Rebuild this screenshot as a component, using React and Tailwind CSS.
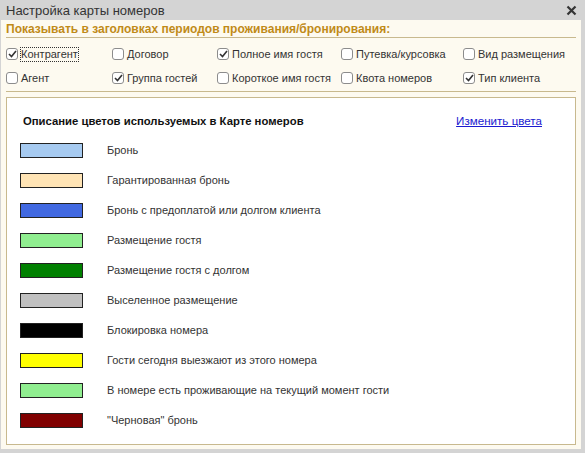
import React from 'react';

const options = [
  [
    { label: 'Контрагент', checked: true, focus: true },
    { label: 'Договор', checked: false },
    { label: 'Полное имя гостя', checked: true },
    { label: 'Путевка/курсовка', checked: false },
    { label: 'Вид размещения', checked: false },
  ],
  [
    { label: 'Агент', checked: false },
    { label: 'Группа гостей', checked: true },
    { label: 'Короткое имя гостя', checked: false },
    { label: 'Квота номеров', checked: false },
    { label: 'Тип клиента', checked: true },
  ],
];

const legend = [
  { color: 'bg-[#a6caf0]', label: 'Бронь' },
  { color: 'bg-[#ffe4b5]', label: 'Гарантированная бронь' },
  { color: 'bg-[#4169e1]', label: 'Бронь с предоплатой или долгом клиента' },
  { color: 'bg-[#90ee90]', label: 'Размещение гостя' },
  { color: 'bg-[#008000]', label: 'Размещение гостя с долгом' },
  { color: 'bg-[#c0c0c0]', label: 'Выселенное размещение' },
  { color: 'bg-[#000000]', label: 'Блокировка номера' },
  { color: 'bg-[#ffff00]', label: 'Гости сегодня выезжают из этого номера' },
  { color: 'bg-[#90ee90]', label: 'В номере есть проживающие на текущий момент гости' },
  { color: 'bg-[#800000]', label: '"Черновая" бронь' },
];

const cols = ['w-[106px]', 'w-[105px]', 'w-[124px]', 'w-[122px]', 'w-[110px]'];

const CheckBox = ({ label, checked, focus, width }) => (
  <div className={`flex items-center h-[12px] ${width}`}>
    <span className="w-[12px] h-[12px] rounded-[3px] border border-[#8c8c8c] bg-white flex items-center justify-center shrink-0">
      {checked && (
        <svg width="9" height="8" viewBox="0 0 9 8">
          <path d="M1 4 L3.5 6.5 L8 1" fill="none" stroke="#333" strokeWidth="1.6" />
        </svg>
      )}
    </span>
    <span className={`ml-[3px] text-[11px] text-[#333] leading-[13px] ${focus ? 'outline outline-1 outline-dotted outline-[#333]' : ''}`}>
      {label}
    </span>
  </div>
);

const App = () => {
  return (
    <div className="w-[585px] h-[453px] bg-[#d4d4d4] flex flex-col" style={{ fontFamily: '"Liberation Sans", Arial, sans-serif' }}>
      <div className="h-[20px] shrink-0 flex items-center justify-between pl-[6px] pr-[8px]">
        <span className="text-[13px] leading-[15px] text-[#333]">Настройка карты номеров</span>
        <svg width="11" height="11" viewBox="0 0 11 11">
          <path d="M1.5 1.5 L9.5 9.5 M9.5 1.5 L1.5 9.5" stroke="#333" strokeWidth="2.2" />
        </svg>
      </div>
      <div className="flex-1 min-h-0 ml-[1px] mr-[4px] mb-[4px] bg-[#fdfaf0] flex flex-col px-[5px]">
        <div className="h-[18px] shrink-0 flex items-end border-b border-[#c8b98e]">
          <span className="text-[12px] font-bold text-[#c08a18] leading-[15px]">
            Показывать в заголовках периодов проживания/бронирования:
          </span>
        </div>
        <div className="shrink-0 flex flex-col gap-[12px] pt-[10px] pb-[7px] border-b border-[#c8b98e]">
          {options.map((row, i) => (
            <div key={i} className="flex">
              {row.map((o, j) => (
                <CheckBox key={o.label} {...o} width={cols[j]} />
              ))}
            </div>
          ))}
        </div>
        <div className="mt-[5px] mb-[4px] flex-1 bg-white border border-[#c8b98e] flex flex-col">
          <div className="flex justify-between items-center h-[14px] mt-[16px] pl-[16px] pr-[33px]">
            <span className="text-[11.3px] leading-[14px] font-bold text-[#111]">Описание цветов используемых в Карте номеров</span>
            <span className="text-[11.6px] leading-[14px] text-[#1a1ad0] underline">Изменить цвета</span>
          </div>
          <div className="flex flex-col gap-[15px] pt-[15px] pl-[13px]">
            {legend.map((l) => (
              <div key={l.label} className="flex items-center h-[15px]">
                <span className={`w-[63px] h-[15px] border border-[#222] ${l.color}`} />
                <span className="ml-[24px] text-[11px] leading-[13px] text-[#333]">{l.label}</span>
              </div>
            ))}
          </div>
        </div>
      </div>
    </div>
  );
};

export default App;
